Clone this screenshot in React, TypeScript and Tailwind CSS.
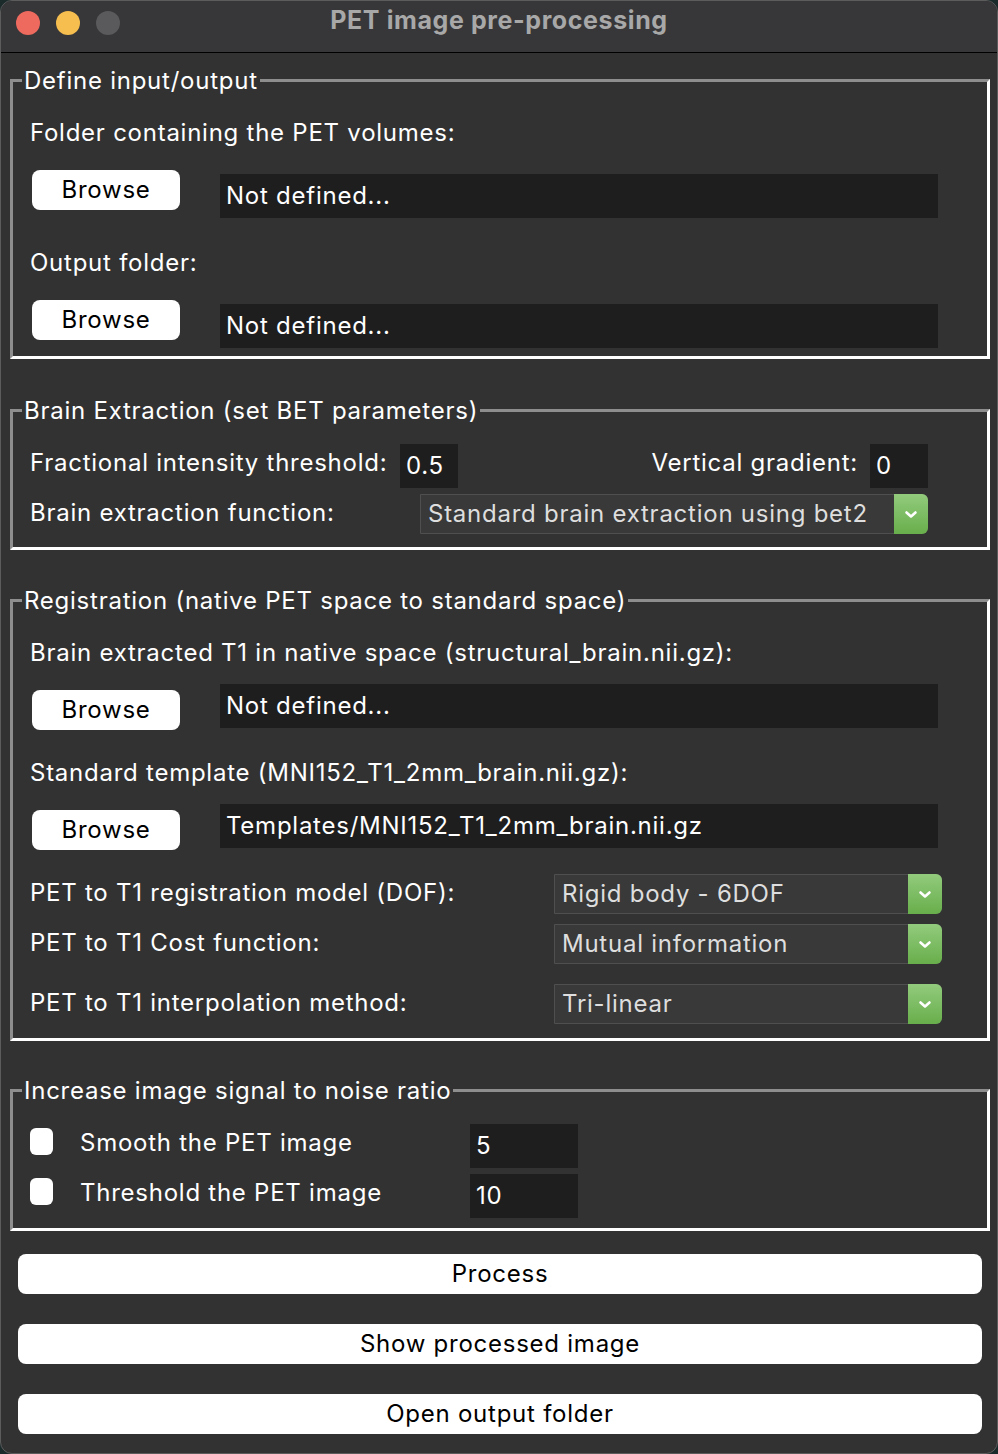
import React from "react";

const font = "font-['Inter',sans-serif] tracking-[0.75px]";

const Frame = ({ title, children, className = "", bodyClass = "" }: { title: string; children: React.ReactNode; className?: string; bodyClass?: string }) => {
    return <div className={"ml-[9px] mr-[7px] flex flex-col border-[3px] border-t-[#8e8e8e] border-l-[#8e8e8e] border-r-white border-b-white " + className}>
        <div className="-mt-[15px] ml-[9px] px-[2px] w-fit bg-[#323232] text-white text-[24px] leading-[28px]">
            {title}
        </div>
        <div className={"flex flex-col pl-[17px] " + bodyClass}>
            {children}
        </div>
    </div>
}

const Label = ({ children, className = "" }: { children: React.ReactNode; className?: string }) => {
    return <div className={"text-white text-[24px] leading-[30px] whitespace-nowrap " + className}>{children}</div>
}

const BrowseButton = ({ className = "" }: { className?: string }) => {
    return <button className={"ml-[2px] w-[148px] h-[40px] shrink-0 rounded-[8px] bg-white text-black text-[24px] leading-[40px] " + className}>
        Browse
    </button>
}

const Entry = ({ value, className = "" }: { value: string; className?: string }) => {
    return <div className={"h-[44px] bg-[#1e1e1e] text-white text-[24px] leading-[44px] pl-[6px] whitespace-nowrap " + className}>
        {value}
    </div>
}

const Combo = ({ value, className = "" }: { value: string; className?: string }) => {
    return <div className={"h-[40px] flex bg-[#393939] border border-[#4f4f4f] rounded-r-[6px] " + className}>
        <div className="flex-1 pl-[7px] text-[#dedede] text-[24px] leading-[38px] whitespace-nowrap">{value}</div>
        <div className="w-[34px] -my-px -mr-px rounded-r-[6px] bg-gradient-to-b from-[#92cb7c] to-[#68ae4b] flex items-center justify-center">
            <svg width="14" height="9" viewBox="0 0 14 9">
                <path d="M2.5 2.5 L7 6.5 L11.5 2.5" fill="none" stroke="white" strokeWidth="2.6" strokeLinecap="round" strokeLinejoin="round" />
            </svg>
        </div>
    </div>
}

const Check = () => {
    return <div className="mt-[4px] w-[23px] h-[27px] shrink-0 rounded-[6px] bg-white"></div>
}

const BigButton = ({ label, className = "" }: { label: string; className?: string }) => {
    return <button className={"ml-[17px] mr-[15px] h-[40px] rounded-[8px] bg-white text-black text-[24px] leading-[40px] " + className}>
        {label}
    </button>
}

export default function App() {
    return <div className={"w-[998px] h-[1454px] bg-[#1b2b2c] " + font}>
        <div className="w-full h-full flex flex-col rounded-[12px] overflow-hidden bg-[#323232] border border-[#5c5c5c]">
            {/* title bar */}
            <div className="h-[52px] shrink-0 flex items-center bg-[#373739] border-b border-black relative">
                <div className="flex gap-[16px] pl-[15px] -mt-[8px]">
                    <div className="w-[24px] h-[24px] rounded-full bg-[#ee6a5f]"></div>
                    <div className="w-[24px] h-[24px] rounded-full bg-[#f5be4f]"></div>
                    <div className="w-[24px] h-[24px] rounded-full bg-[#5a5a5c]"></div>
                </div>
                <div className="absolute inset-x-0 top-[3px] text-center text-[#a8a8a8] font-bold text-[25px] leading-[32px] tracking-[0.6px]">
                    PET image pre-processing
                </div>
            </div>

            {/* input / output */}
            <Frame title="Define input/output" className="mt-[26px]" bodyClass="pr-[49px] pb-[8px]">
                <Label className="mt-[23px]">Folder containing the PET volumes:</Label>
                <div className="mt-[22px] flex items-start gap-[40px]">
                    <BrowseButton />
                    <Entry value="Not defined..." className="mt-[4px] flex-1" />
                </div>
                <Label className="mt-[30px]">Output folder:</Label>
                <div className="mt-[22px] flex items-start gap-[40px]">
                    <BrowseButton />
                    <Entry value="Not defined..." className="mt-[4px] flex-1" />
                </div>
            </Frame>

            {/* BET */}
            <Frame title="Brain Extraction (set BET parameters)" className="mt-[50px]" bodyClass="pr-[59px] pb-[13px]">
                <div className="mt-[19px] flex items-start">
                    <Label className="mt-[4px] w-[370px]">Fractional intensity threshold:</Label>
                    <Entry value="0.5" className="w-[58px]" />
                    <Label className="mt-[4px] flex-1 text-right">Vertical gradient:</Label>
                    <Entry value="0" className="ml-[12px] w-[58px]" />
                </div>
                <div className="mt-[6px] flex items-start">
                    <Label className="mt-[4px] w-[390px]">Brain extraction function:</Label>
                    <Combo value="Standard brain extraction using bet2" className="flex-1" />
                </div>
            </Frame>

            {/* registration */}
            <Frame title="Registration (native PET space to standard space)" className="mt-[49px]" bodyClass="pr-[45px] pb-[14px]">
                <Label className="mt-[23px]">Brain extracted T1 in native space (structural_brain.nii.gz):</Label>
                <div className="mt-[16px] flex items-start gap-[40px]">
                    <BrowseButton className="mt-[6px]" />
                    <Entry value="Not defined..." className="flex-1 mr-[4px]" />
                </div>
                <Label className="mt-[28px]">Standard template (MNI152_T1_2mm_brain.nii.gz):</Label>
                <div className="mt-[16px] flex items-start gap-[40px]">
                    <BrowseButton className="mt-[6px]" />
                    <Entry value="Templates/MNI152_T1_2mm_brain.nii.gz" className="flex-1 mr-[4px]" />
                </div>
                <div className="mt-[24px] flex items-start">
                    <Label className="mt-[4px] w-[524px]">PET to T1 registration model (DOF):</Label>
                    <Combo value="Rigid body - 6DOF" className="flex-1" />
                </div>
                <div className="mt-[10px] flex items-start">
                    <Label className="mt-[4px] w-[524px]">PET to T1 Cost function:</Label>
                    <Combo value="Mutual information" className="flex-1" />
                </div>
                <div className="mt-[20px] flex items-start">
                    <Label className="mt-[4px] w-[524px]">PET to T1 interpolation method:</Label>
                    <Combo value="Tri-linear" className="flex-1" />
                </div>
            </Frame>

            {/* SNR */}
            <Frame title="Increase image signal to noise ratio" className="mt-[48px]" bodyClass="pb-[10px]">
                <div className="mt-[19px] flex items-start">
                    <Check />
                    <Label className="mt-[4px] ml-[27px] w-[390px]">Smooth the PET image</Label>
                    <Entry value="5" className="w-[108px]" />
                </div>
                <div className="mt-[6px] flex items-start">
                    <Check />
                    <Label className="mt-[4px] ml-[27px] w-[390px]">Threshold the PET image</Label>
                    <Entry value="10" className="w-[108px]" />
                </div>
            </Frame>

            <BigButton label="Process" className="mt-[23px]" />
            <BigButton label="Show processed image" className="mt-[30px]" />
            <BigButton label="Open output folder" className="mt-[30px]" />
        </div>
    </div>
}
